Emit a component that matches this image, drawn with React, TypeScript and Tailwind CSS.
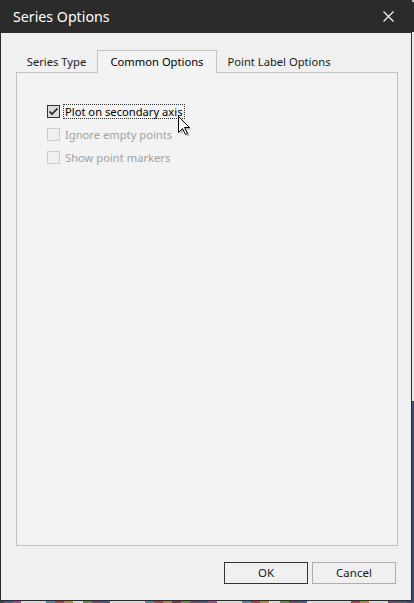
import React from 'react';

const strip = [
  ['#4a3a5a', 4], ['#4a5a8a', 9], ['#a04a9a', 8], ['#d8d8d8', 25], ['#4a8a9a', 9], ['#b03a4a', 9],
  ['#b08a3a', 9], ['#d8d8d8', 10], ['#6a8a4a', 9], ['#6a4a7a', 9], ['#4a5a8a', 9], ['#d8d8d8', 35],
  ['#4a8a9a', 9], ['#b03a4a', 9], ['#b08a3a', 9], ['#7a3a4a', 9], ['#6a8a4a', 9], ['#6a4a7a', 9],
  ['#4a5a8a', 9], ['#a04a9a', 9], ['#d8d8d8', 25], ['#4a8a9a', 9], ['#b03a4a', 9], ['#b08a3a', 9],
  ['#d8d8d8', 11], ['#6a8a4a', 9], ['#6a4a7a', 9], ['#4a5a8a', 9], ['#d8d8d8', 44], ['#b03a4a', 9],
  ['#b08a3a', 9], ['#d8d8d8', 19], ['#6a4a7a', 9], ['#4a5a8a', 10],
] as [string, number][];

function Check({ checked, disabled, label, focused }: { checked?: boolean; disabled?: boolean; label: string; focused?: boolean }) {
  return (
    <div className="flex items-center h-[23px]">
      <div
        className={`w-[13px] h-[13px] border flex items-center justify-center ${
          disabled ? 'border-[#cccccc] bg-[#f0f0f0]' : 'border-[#333333] bg-[#dadada]'
        }`}
      >
        {checked && (
          <svg width="11" height="11" viewBox="0 0 11 11">
            <path d="M1.5 5.5 L4 8 L9.5 2.5" fill="none" stroke="#202020" strokeWidth="1.6" />
          </svg>
        )}
      </div>
      <span
        className={`ml-[3px] px-[1px] leading-[13px] text-[11.2px] ${
          focused ? 'border border-dotted border-[#333]' : 'border border-transparent'
        } ${disabled ? 'text-[#a0a0a0]' : 'text-black'}`}
      >
        {label}
      </span>
    </div>
  );
}

export default function App() {
  return (
    <div className="w-[414px] h-[603px] bg-[#3e4a70] overflow-hidden flex flex-col" style={{ fontFamily: '"Noto Sans", "Liberation Sans", sans-serif' }}>
      <div className="flex h-[601px]">
        <div className="relative w-[412px] h-[601px] border border-t-0 border-[#2b2b2b] bg-[#f0f0f0] flex flex-col">
          {/* title bar */}
          <div className="h-[33px] bg-[#2b2b2b] flex items-center justify-between pl-[12px] pr-[17px]">
            <span className="text-white text-[14.2px]">Series Options</span>
            <svg width="11" height="11" viewBox="0 0 11 11">
              <path d="M0.5 0.5 L10.5 10.5 M10.5 0.5 L0.5 10.5" stroke="#ffffff" strokeWidth="1.1" />
            </svg>
          </div>

          {/* tabs */}
          <div className="flex flex-col flex-1 pl-[15px] pr-[13px]">
            <div className="flex items-end h-[39px] text-[11.2px]">
              <div className="w-[81px] h-[21px] flex items-center justify-center pt-[1px] text-[#1a1a1a]">Series Type</div>
              <div className="w-[120px] h-[23px] border border-b-0 border-[#c2c2c2] bg-[#f3f3f3] flex items-center justify-center pt-[1px] text-black relative top-[1px]">
                Common Options
              </div>
              <div className="w-[124px] h-[21px] flex items-center justify-center pt-[1px] text-[#1a1a1a]">Point Label Options</div>
            </div>
            <div className="h-[474px] border border-[#c2c2c2] bg-[#f3f3f3] pt-[27px] pl-[30px]">
              <Check checked focused label="Plot on secondary axis" />
              <Check disabled label="Ignore empty points" />
              <Check disabled label="Show point markers" />
            </div>

            {/* buttons */}
            <div className="flex justify-end gap-[4px] mt-[16px] pr-[2px] text-[11.5px]">
              <button className="w-[84px] h-[22px] border border-[#333333] bg-[#f0f0f0] text-[#1a1a1a]">OK</button>
              <button className="w-[84px] h-[22px] border border-[#adadad] bg-[#f0f0f0] text-[#1a1a1a]">Cancel</button>
            </div>
          </div>

          {/* mouse pointer */}
          <svg className="absolute left-[177px] top-[116px]" width="14" height="21" viewBox="0 0 14 21">
            <path d="M2.5 2.5 L2.5 18.5 L6.5 14.5 L9.5 20.5 L11.5 19.5 L8.5 13.5 L13.5 13.5 Z" fill="rgba(0,0,0,0.25)" />
            <path d="M0.5 0.5 L0.5 16.5 L4.5 12.5 L7.5 18.5 L9.5 17.5 L6.5 11.5 L11.5 11.5 Z" fill="#ffffff" stroke="#000000" strokeWidth="1" strokeLinejoin="round" />
          </svg>
        </div>
        <div className="flex-1 flex flex-col">
          <div className="h-[2px] bg-[#bcbcbc]" />
          <div className="h-[30px] bg-[#2b2b2b]" />
          <div className="flex-1 bg-[#e8e8e8]" />
          <div className="h-[200px] bg-[#3e4a70]" />
        </div>
      </div>
      <div className="flex h-[2px]">
        {strip.map(([c, w], i) => (
          <div key={i} style={{ backgroundColor: c, width: w }} className="h-full" />
        ))}
      </div>
    </div>
  );
}
